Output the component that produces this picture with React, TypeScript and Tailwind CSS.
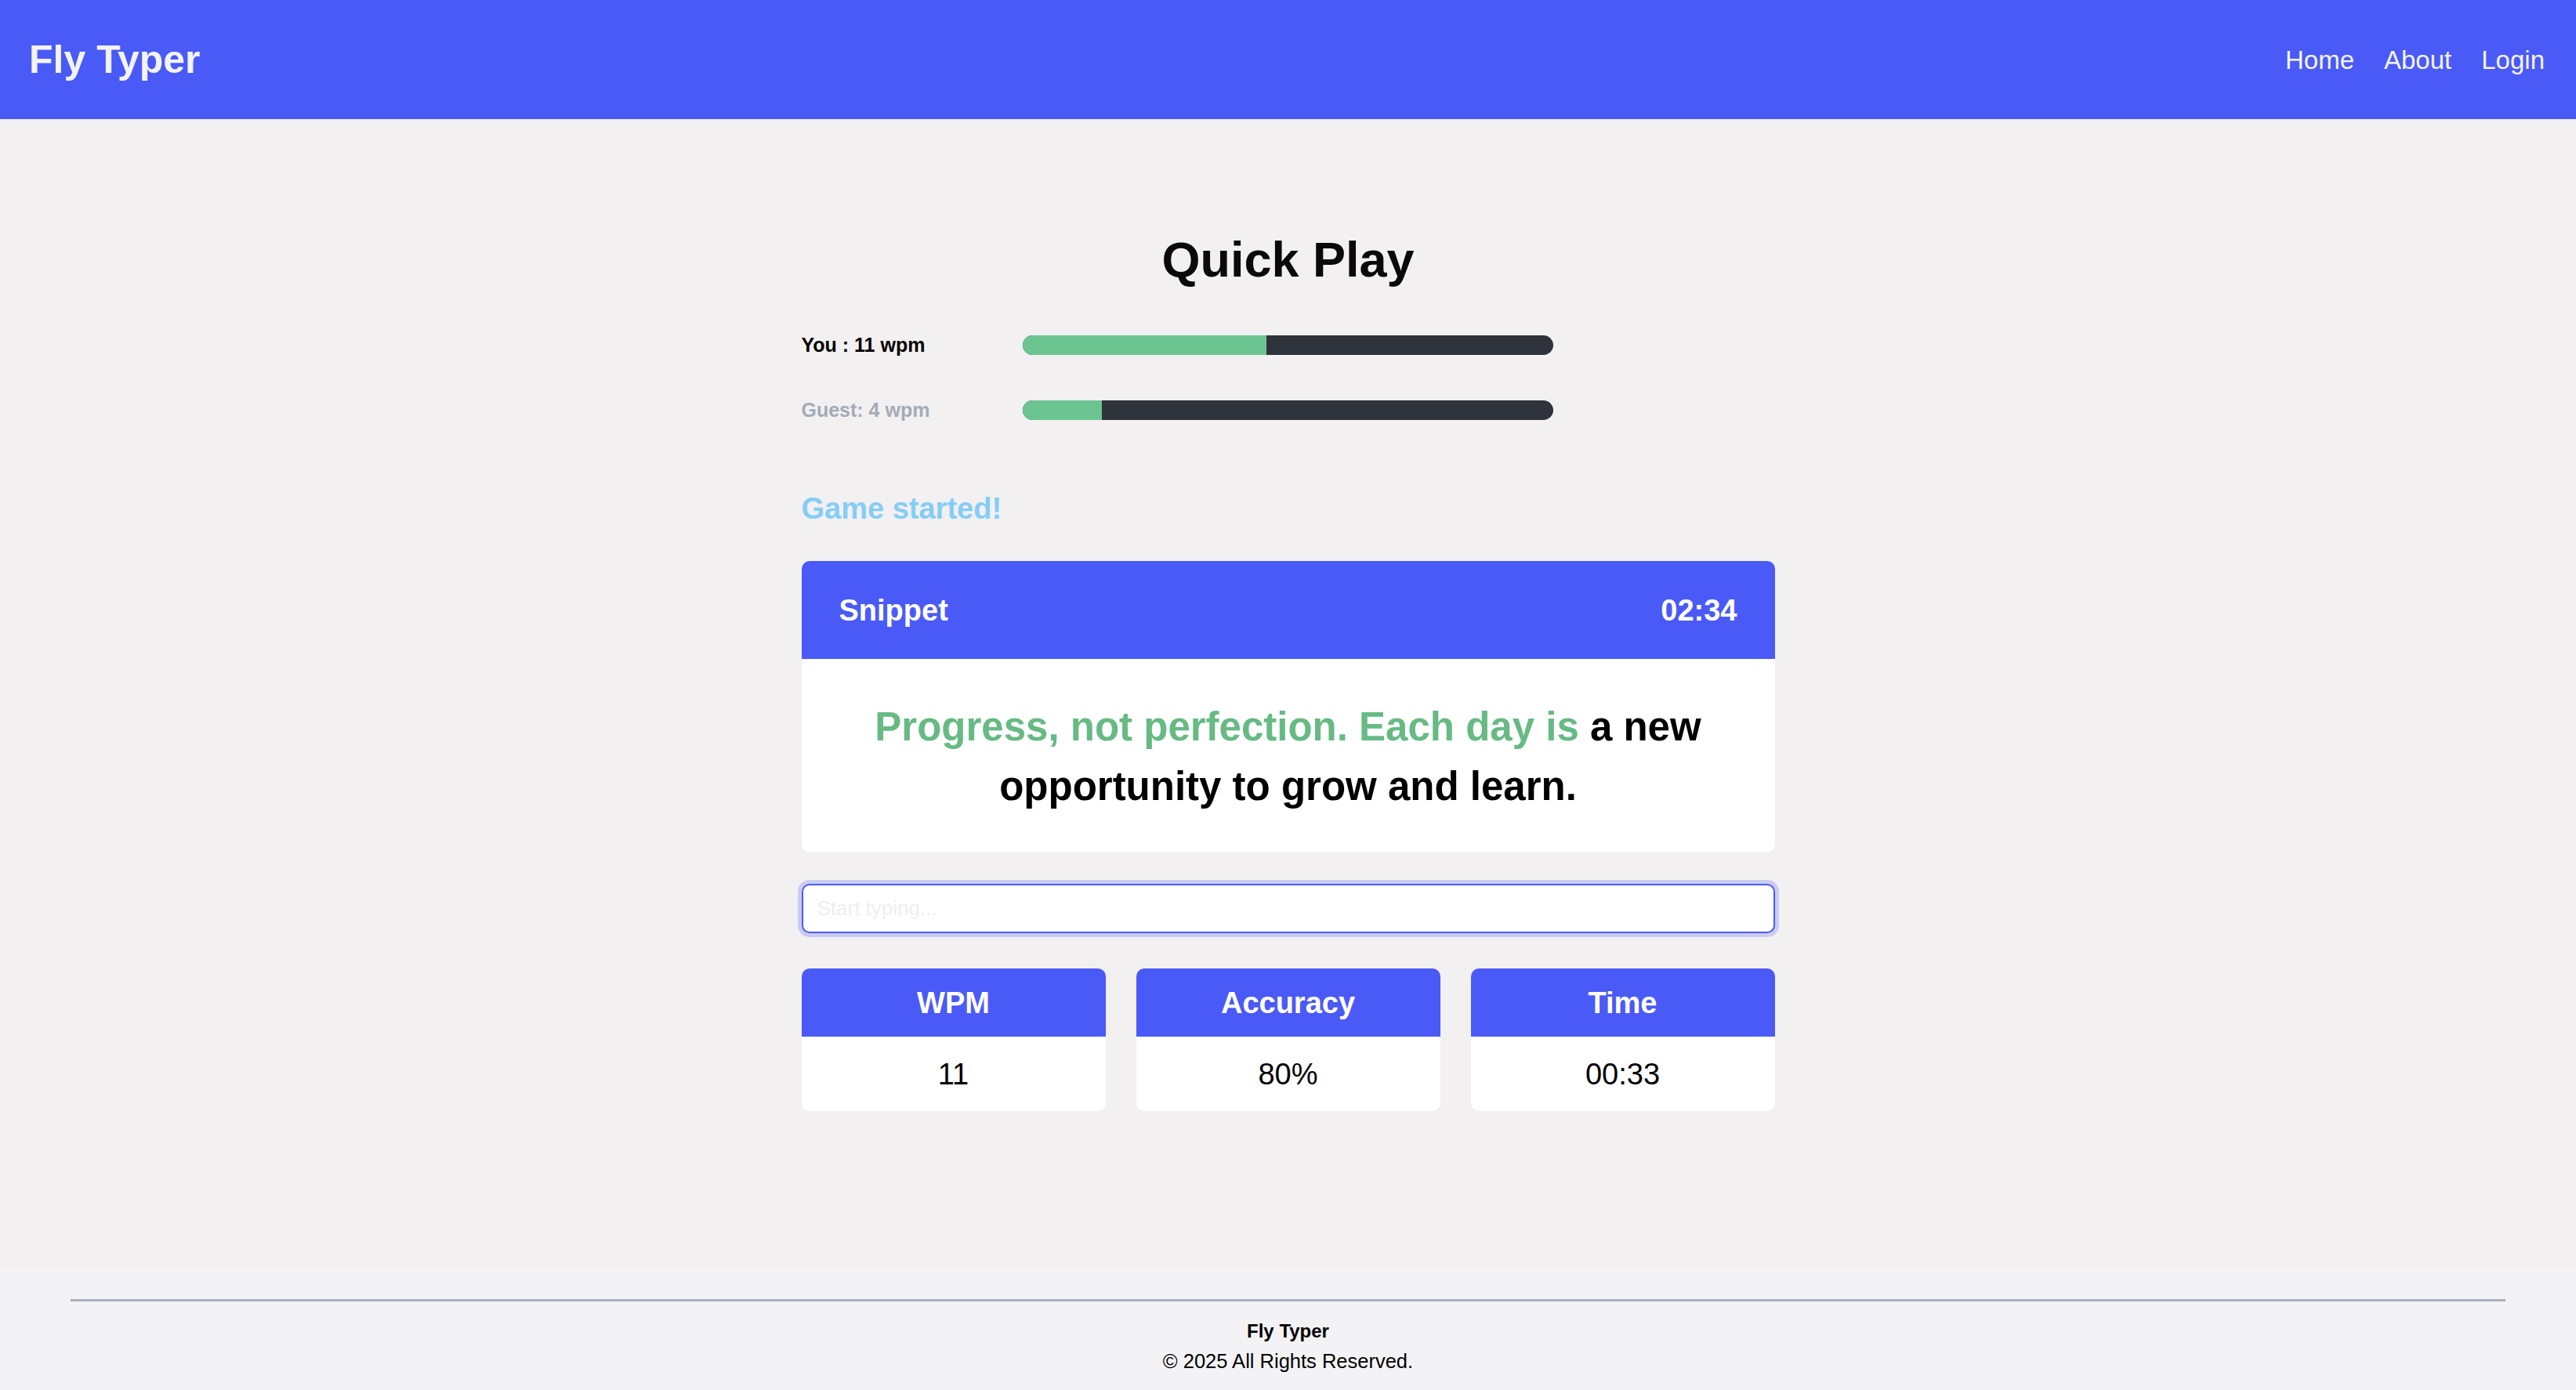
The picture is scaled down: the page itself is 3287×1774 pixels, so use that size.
import React from "react";

const font = { fontFamily: '"Liberation Sans", Arial, Helvetica, sans-serif' };

function Bar({ pct }: { pct: number }) {
  return (
    <div className="h-[25px] w-[677px] overflow-hidden rounded-full bg-[#2f333b]">
      <div className="h-full bg-[#6cc491]" style={{ width: `${pct}%` }} />
    </div>
  );
}

function Stat({ title, value }: { title: string; value: string }) {
  return (
    <div className="flex flex-col overflow-hidden rounded-[10px] bg-white">
      <div className="flex h-[87px] items-center justify-center bg-[#4a5af7] text-[38px] font-bold leading-none text-white">
        {title}
      </div>
      <div className="flex h-[95px] items-center justify-center text-[38px] leading-none text-black">
        {value}
      </div>
    </div>
  );
}

export default function App() {
  return (
    <div style={font} className="flex min-h-screen flex-col bg-[#f2f0f1]">
      <header className="flex h-[152px] items-center justify-between bg-[#4a5af7] pl-[37px] pr-[40px]">
        <div className="text-[50px] font-bold leading-none text-[#f3f3f5]">Fly Typer</div>
        <nav className="flex items-center gap-[38px] text-[33px] leading-none text-[#f3f3f7]">
          <span>Home</span>
          <span>About</span>
          <span>Login</span>
        </nav>
      </header>

      <main className="flex flex-1 flex-col items-center pt-[148px]">
        <div className="flex w-[1242px] flex-col">
          <h1 className="text-center text-[63px] font-bold leading-[63px] text-[#0a0a0a]">Quick Play</h1>

          <div className="mt-[65px] flex items-center">
            <div className="w-[282px] text-[25px] font-bold leading-[25px] text-black">You : 11 wpm</div>
            <Bar pct={46} />
          </div>
          <div className="mt-[58px] flex items-center">
            <div className="w-[282px] text-[25px] font-bold leading-[25px] text-[#a4abb6]">Guest: 4 wpm</div>
            <Bar pct={15} />
          </div>

          <div className="mt-[94px] text-[38px] font-bold leading-[38px] text-[#85cdf6]">Game started!</div>

          <div className="mt-[48px] overflow-hidden rounded-[10px] bg-white">
            <div className="flex h-[125px] items-center justify-between bg-[#4a5af7] px-[48px] text-[38px] font-bold leading-none text-white">
              <span>Snippet</span>
              <span>02:34</span>
            </div>
            <p className="px-[48px] pb-[46px] pt-[49px] text-center text-[51px] font-bold leading-[76px] text-black">
              <span className="text-[#67ba84]">Progress, not perfection. Each day is</span> a new opportunity to grow and learn.
            </p>
          </div>

          <input
            className="mt-[40px] h-[63px] w-full rounded-[10px] border-2 border-[#4a5af5] bg-white px-[18px] text-[26px] text-black shadow-[0_0_0_5px_#c9ccf2] outline-none placeholder:text-[#efefef]"
            placeholder="Start typing..."
          />

          <div className="mt-[45px] grid grid-cols-3 gap-[39px]">
            <Stat title="WPM" value="11" />
            <Stat title="Accuracy" value="80%" />
            <Stat title="Time" value="00:33" />
          </div>
        </div>
      </main>

      <footer className="bg-[#f3f3f5] px-[90px] pb-[18px] pt-[39px]">
        <div className="h-[3px] bg-[#a8aeb9]" />
        <div className="mt-[19px] text-center leading-[38px] text-black">
          <div className="text-[24px] font-bold">Fly Typer</div>
          <div className="text-[25.5px]">© 2025 All Rights Reserved.</div>
        </div>
      </footer>
    </div>
  );
}
